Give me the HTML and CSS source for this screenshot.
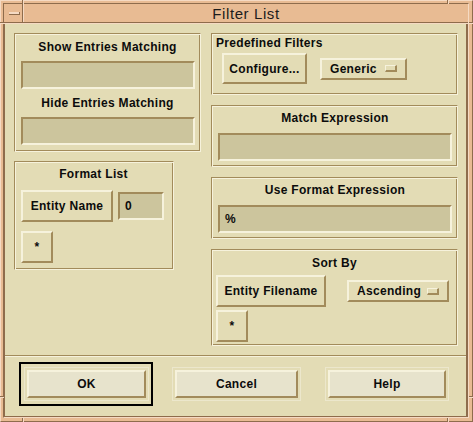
FILE: index.html
```html
<!DOCTYPE html>
<html>
<head>
<meta charset="utf-8">
<title>Filter List</title>
<link rel="stylesheet" href="styles.css">
</head>
<body>
<div class="window">
  <span class="notch-v n-top-l"></span>
  <span class="notch-v n-top-r"></span>
  <span class="notch-v n-bot-l"></span>
  <span class="notch-v n-bot-r"></span>
  <span class="notch-h n-left-t"></span>
  <span class="notch-h n-right-t"></span>
  <span class="notch-h n-left-b"></span>
  <span class="notch-h n-right-b"></span>
  <div class="inner">
    <div class="titlebar">
      <div class="menubtn"><span class="menuglyph"></span></div>
      <div class="title">Filter List</div>
    </div>
    <div class="client">
      <div class="main">
        <div class="col col-left">
          <div class="panel panel-entries">
            <div class="plabel">Show Entries Matching</div>
            <div class="field field-entries"></div>
            <div class="plabel plabel-gap">Hide Entries Matching</div>
            <div class="field field-entries"></div>
          </div>
          <div class="panel panel-format">
            <div class="plabel">Format List</div>
            <div class="row row-format">
              <div class="btn btn-entity">Entity Name</div>
              <div class="field field-num">0</div>
            </div>
            <div class="btn btn-star star-format">*</div>
          </div>
        </div>
        <div class="col col-right">
          <div class="panel panel-predef">
            <div class="plabel plabel-left">Predefined Filters</div>
            <div class="row row-predef">
              <div class="btn btn-config">Configure...</div>
              <div class="option opt-generic">Generic<span class="ind"></span></div>
            </div>
          </div>
          <div class="panel panel-expr">
            <div class="plabel">Match Expression</div>
            <div class="field field-expr"></div>
          </div>
          <div class="panel panel-expr">
            <div class="plabel">Use Format Expression</div>
            <div class="field field-expr">%</div>
          </div>
          <div class="panel panel-sort">
            <div class="plabel">Sort By</div>
            <div class="row row-sort">
              <div class="btn btn-filename">Entity Filename</div>
              <div class="option opt-asc">Ascending<span class="ind"></span></div>
            </div>
            <div class="btn btn-star star-sort">*</div>
          </div>
        </div>
      </div>
      <div class="sep"></div>
      <div class="actions">
        <div class="default-frame">
          <div class="pbtn-wrap"><div class="pbtn pbtn-ok">OK</div></div>
        </div>
        <div class="pbtn-wrap wrap-cancel"><div class="pbtn pbtn-cancel">Cancel</div></div>
        <div class="pbtn-wrap wrap-help"><div class="pbtn pbtn-help">Help</div></div>
      </div>
    </div>
  </div>
</div>
</body>
</html>
```

FILE: styles.css
```css
:root {
  --bg: #e3dcb5;
  --field: #ccc59d;
  --light: #f6f2dc;
  --dark: #a28b5b;
  --btn: #e7e3cc;
  --faint: #ece7cc;
  --peach: #e8bb93;
  --peach-light: #f5dac3;
  --peach-dark: #8e6c4c;
  --ink: #0c0c0c;
}

* { box-sizing: border-box; }

html, body {
  margin: 0;
  padding: 0;
  background: var(--peach);
}

body {
  font-family: "Liberation Sans", Arial, sans-serif;
  font-size: 12px;
  font-weight: bold;
  letter-spacing: 0.3px;
  color: var(--ink);
}

.window {
  position: relative;
  width: 473px;
  height: 422px;
  background: var(--peach);
  border: 1px solid;
  border-color: var(--peach-light) var(--peach-dark) var(--peach-dark) var(--peach-light);
  padding: 2px 3px 3px 2px;
}

.notch-v, .notch-h {
  position: absolute;
  background: var(--peach-light);
}
.notch-v { width: 1px; height: 4px; box-shadow: -1px 0 0 var(--peach-dark); }
.notch-h { width: 4px; height: 1px; box-shadow: 0 -1px 0 var(--peach-dark); }
.n-top-l { left: 22px; top: -1px; }
.n-top-r { left: 447px; top: -1px; }
.n-bot-l { left: 22px; bottom: -1px; }
.n-bot-r { left: 447px; bottom: -1px; }
.n-left-t { left: -1px; top: 22px; }
.n-right-t { right: -1px; top: 22px; }
.n-left-b { left: -1px; top: 396px; }
.n-right-b { right: -1px; top: 396px; }

.inner {
  width: 466px;
  height: 415px;
  border: 1px solid;
  border-color: var(--peach-dark) var(--peach-light) var(--peach-light) var(--peach-dark);
  display: flex;
  flex-direction: column;
}

.titlebar {
  height: 20px;
  display: flex;
  background: var(--peach);
  box-shadow: inset 0 -1px 0 var(--peach-light), inset 0 -2px 0 var(--peach-dark);
}

.menubtn {
  width: 20px;
  height: 18px;
  border-right: 1px solid var(--peach-light);
  box-shadow: inset -1px 0 0 var(--peach-dark);
  padding: 8px 0 0 5px;
}

.menuglyph {
  display: block;
  width: 11px;
  height: 3px;
  background: var(--peach-light);
  border-bottom: 1px solid var(--peach-dark);
  border-right: 1px solid var(--peach-dark);
}

.title {
  flex: 1;
  text-align: center;
  font-family: "Liberation Sans", Arial, sans-serif;
  font-weight: normal;
  font-size: 15px;
  letter-spacing: 0.6px;
  line-height: 19px;
  color: #1c1c1c;
}

.client {
  flex: 1;
  background: var(--bg);
  border-left: 1px solid var(--peach-dark);
  border-right: 2px solid var(--peach-dark);
  border-bottom: 1px solid var(--peach-dark);
  padding-top: 9px;
  display: flex;
  flex-direction: column;
}

.main {
  display: flex;
  gap: 10px;
  padding: 0 8px 0 9px;
  height: 313px;
}

.col {
  display: flex;
  flex-direction: column;
}
.col-left { width: 187px; gap: 9px; }
.col-right { width: 247px; gap: 10px; }

.panel {
  border: 1px solid;
  border-color: var(--dark) var(--light) var(--light) var(--dark);
  box-shadow: inset 1px 1px 0 var(--light), inset -1px -1px 0 var(--dark);
}

.plabel {
  line-height: 16px;
  height: 16px;
  text-align: center;
  white-space: nowrap;
}
.plabel-left { text-align: left; }

.panel-entries {
  width: 187px;
  height: 119px;
  padding: 5px 6px 0 6px;
}
.plabel-gap { margin-top: 6px; }
.field-entries { margin-top: 6px; width: 174px; }

.panel-format {
  width: 160px;
  height: 109px;
  padding: 4px 7px 0 6px;
}

.row {
  display: flex;
  align-items: center;
}
.row-format { margin-top: 8px; gap: 5px; }
.star-format { margin-top: 9px; }

.panel-predef {
  height: 62px;
  padding: 1px 4px 0 4px;
}
.row-predef { margin-top: 2px; padding-left: 6px; gap: 13px; }

.panel-expr {
  height: 62px;
  padding: 4px 5px 0 6px;
}
.field-expr { margin-top: 7px; width: 234px; }

.panel-sort {
  height: 97px;
  padding: 5px 4px 0 4px;
}
.row-sort { margin-top: 4px; gap: 21px; }
.star-sort { margin-top: 3px; }

.btn {
  border: 2px solid;
  border-color: var(--light) var(--dark) var(--dark) var(--light);
  background: var(--bg);
  display: flex;
  align-items: center;
  justify-content: center;
  white-space: nowrap;
}
.btn-entity { width: 92px; height: 32px; }
.btn-star { width: 32px; height: 32px; }
.btn-config { width: 85px; height: 31px; }
.btn-filename { width: 110px; height: 32px; }

.field {
  border: 2px solid;
  border-color: var(--dark) var(--light) var(--light) var(--dark);
  background: var(--field);
  height: 28px;
  padding-left: 5px;
  display: flex;
  align-items: center;
}
.field-num { width: 46px; }

.option {
  border: 2px solid;
  border-color: var(--light) var(--dark) var(--dark) var(--light);
  background: var(--bg);
  height: 22px;
  padding: 0 8px;
  display: flex;
  align-items: center;
  justify-content: space-between;
  white-space: nowrap;
}
.opt-generic { width: 87px; }
.opt-asc { width: 102px; }

.ind {
  display: block;
  width: 12px;
  height: 7px;
  border-style: solid;
  border-width: 1px 2px 2px 1px;
  border-color: var(--light) var(--dark) var(--dark) var(--light);
  background: var(--bg);
}

.sep {
  margin-top: 9px;
  height: 2px;
  border-top: 1px solid var(--dark);
  border-bottom: 1px solid var(--light);
}

.actions {
  display: flex;
  align-items: center;
  padding: 5px 0 0 14px;
}

.default-frame {
  border: 2px solid #000;
  padding: 3px 2px 3px 3px;
}

.pbtn-wrap {
  border: 1px solid var(--faint);
  padding: 2px;
}
.wrap-cancel { margin-left: 19px; }
.wrap-help { margin-left: 24px; }

.pbtn {
  height: 28px;
  border: 2px solid;
  border-color: var(--light) var(--dark) var(--dark) var(--light);
  background: var(--btn);
  display: flex;
  align-items: center;
  justify-content: center;
}
.pbtn-ok { width: 119px; }
.pbtn-cancel { width: 123px; }
.pbtn-help { width: 118px; }
```
